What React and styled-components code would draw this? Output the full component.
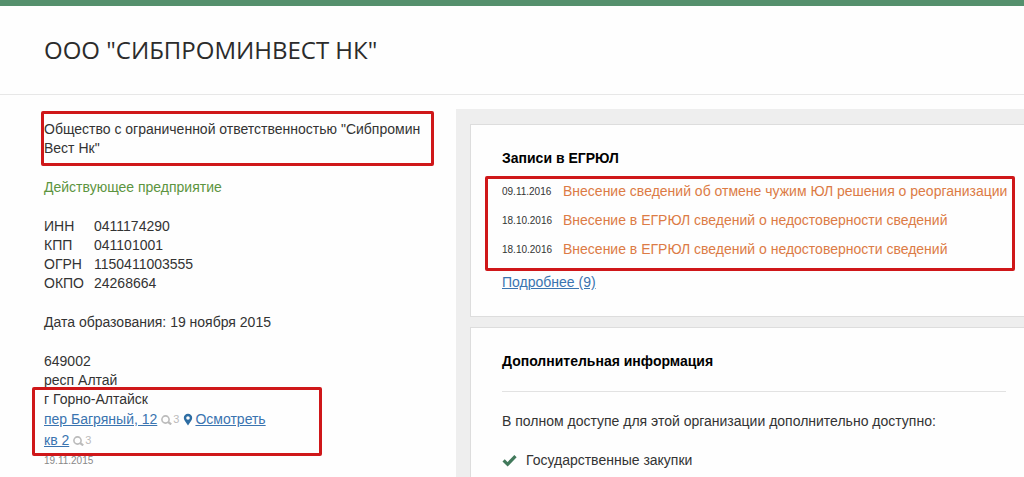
import React from "react";
import styled, { createGlobalStyle } from "styled-components";

const requisites = [
  { name: "ИНН", value: "0411174290" },
  { name: "КПП", value: "041101001" },
  { name: "ОГРН", value: "1150411003555" },
  { name: "ОКПО", value: "24268664" },
];

const records = [
  { id: 1, date: "09.11.2016", text: "Внесение сведений об отмене чужим ЮЛ решения о реорганизации" },
  { id: 2, date: "18.10.2016", text: "Внесение в ЕГРЮЛ сведений о недостоверности сведений" },
  { id: 3, date: "18.10.2016", text: "Внесение в ЕГРЮЛ сведений о недостоверности сведений" },
];

function SearchCount({ count }) {
  return (
    <Count>
      <svg width="11" height="10" viewBox="0 0 11 10" fill="none" stroke="currentColor" aria-hidden="true">
        <circle cx="4.5" cy="4.5" r="3.6" strokeWidth="1.6" />
        <path d="M7 6.8l3.2 2.6" strokeWidth="2.2" />
      </svg>
      {count}
    </Count>
  );
}

function PinIcon() {
  return (
    <svg width="10" height="13" viewBox="0 0 10 13" aria-hidden="true">
      <path
        d="M5 .8a4.2 4.2 0 0 0-4.2 4.2c0 2.6 2.6 4.6 4.2 7.4c1.600-2.800 4.200-4.800 4.200-7.400A4.200 4.200 0 0 0 5 .8zM5 3.200a1.800 1.800 0 1 1 0 3.600a1.800 1.800 0 0 1 0-3.600z"
        fill="currentColor"
        fillRule="evenodd"
      />
    </svg>
  );
}

function CheckIcon() {
  return (
    <svg width="15" height="13" viewBox="0 0 15 13" fill="none" aria-hidden="true">
      <path d="M1.600 6.300l4 4L13.500 2.200" stroke="#41795b" strokeWidth="3.200" />
    </svg>
  );
}

function Company() {
  return (
    <Info>
      <Marked $inset="-9px 22px -8px -3px">
        Общество с ограниченной ответственностью "Сибпромин
        <br />
        Вест Нк"
      </Marked>
      <Status>Действующее предприятие</Status>
      <Requisites>
        <tbody>
          {requisites.map((item) => (
            <tr key={item.name}>
              <th scope="row">{item.name}</th>
              <td>{item.value}</td>
            </tr>
          ))}
        </tbody>
      </Requisites>
      <div>Дата образования: 19 ноября 2015</div>
      <div>
        <div>649002</div>
        <div>респ Алтай</div>
        <Marked $inset="-3px 134px -5px -12px">
          <div>г Горно-Алтайск</div>
          <AddressLine>
            <Link href="#street">пер Багряный, 12</Link>
            <SearchCount count={3} />
            <Place>
              <PinIcon />
              <Link href="#map">Осмотреть</Link>
            </Place>
          </AddressLine>
          <AddressLine>
            <Link href="#flat">кв 2</Link>
            <SearchCount count={3} />
          </AddressLine>
        </Marked>
        <Updated>19.11.2015</Updated>
      </div>
    </Info>
  );
}

function App() {
  return (
    <Page>
      <GlobalStyle />
      <Header>
        <Title>ООО "СИБПРОМИНВЕСТ НК"</Title>
      </Header>
      <Content>
        <Company />
        <Panel>
          <Card>
            <CardTitle>Записи в ЕГРЮЛ</CardTitle>
            <Marked $inset="-1px 9px 2px -17px">
              <Records>
                {records.map((record) => (
                  <Record key={record.id}>
                    <RecordDate>{record.date}</RecordDate>
                    <RecordLink href="#record">{record.text}</RecordLink>
                  </Record>
                ))}
              </Records>
            </Marked>
            <Link href="#more">Подробнее (9)</Link>
          </Card>
          <Card $grow>
            <CardTitle $ruled>Дополнительная информация</CardTitle>
            <Text>В полном доступе для этой организации дополнительно доступно:</Text>
            <Feature>
              <CheckIcon />
              Государственные закупки
            </Feature>
          </Card>
        </Panel>
      </Content>
    </Page>
  );
}

const GlobalStyle = createGlobalStyle`
  * {
    box-sizing: border-box;
  }

  body {
    margin: 0;
    background-color: #fefefe;
    color: #333333;
    font-family: "Liberation Sans", Arial, sans-serif;
    font-size: 14px;
    line-height: 19px;
  }
`;

const Page = styled.div`
  display: flex;
  flex-direction: column;
  min-height: 100vh;
  border-top: 6px solid #55906d;
`;

const Header = styled.header`
  padding: 28px 44px;
  border-bottom: 1px solid #e7e7e7;
`;

const Title = styled.h1`
  margin: 0;
  color: #2b2b2b;
  font-family: "Open Sans", "Noto Sans", sans-serif;
  font-size: 24px;
  font-weight: 400;
  line-height: 32px;
`;

const Content = styled.main`
  flex: 1;
  display: grid;
  grid-template-columns: 456px minmax(0, 1fr);
`;

const Info = styled.section`
  display: flex;
  flex-direction: column;
  gap: 20px;
  padding: 25px 0 0 44px;
`;

/* red frame drawn over the important part */
const Marked = styled.div`
  position: relative;

  &::after {
    content: "";
    position: absolute;
    inset: ${(props) => props.$inset};
    border: 3px solid #cf1719;
    border-radius: 2px;
    pointer-events: none;
  }
`;

const Status = styled.div`
  color: #5c9440;
`;

const Requisites = styled.table`
  align-self: flex-start;
  border-collapse: collapse;

  th,
  td {
    padding: 0;
    font-weight: 400;
    text-align: left;
  }

  th {
    width: 50px;
  }
`;

const Link = styled.a`
  color: #3a74b0;
  text-decoration: underline;
`;

const AddressLine = styled.div`
  display: flex;
  align-items: center;
  gap: 4px;
  line-height: 21px;
`;

const Count = styled.span`
  display: flex;
  align-items: center;
  gap: 1px;
  color: #bbbbbb;
  font-size: 11px;
`;

const Place = styled.span`
  display: flex;
  align-items: center;
  gap: 2px;
  color: #2d6da3;
`;

const Updated = styled.div`
  color: #888888;
  font-size: 10px;
`;

const Panel = styled.section`
  display: flex;
  flex-direction: column;
  gap: 10px;
  margin-top: 14px;
  padding: 15px 0 0 14px;
  background-color: #eeeeee;
`;

const Card = styled.section`
  flex: ${(props) => (props.$grow ? 1 : "none")};
  padding: 23px 0 24px 31px;
  border: 1px solid #dddddd;
  border-right: 0;
  background-color: #fefefe;
`;

const CardTitle = styled.h2`
  margin: 0 18px 9px 0;
  padding-bottom: ${(props) => (props.$ruled ? "20px" : 0)};
  border-bottom: ${(props) => (props.$ruled ? "1px solid #e2e2e2" : 0)};
  color: #000000;
  font-size: 14px;
  font-weight: 700;
  line-height: 20px;
`;

const Records = styled.ul`
  margin: 0;
  padding: 0 0 9px;
  list-style: none;
`;

const Record = styled.li`
  display: flex;
  align-items: center;
  gap: 10px;
  line-height: 29px;
`;

const RecordDate = styled.time`
  flex: none;
  width: 51px;
  font-size: 10px;
`;

const RecordLink = styled.a`
  color: #dc7b45;
  text-decoration: none;
  white-space: nowrap;
`;

const Text = styled.p`
  margin: 20px 0;
`;

const Feature = styled.div`
  display: flex;
  align-items: center;
  gap: 9px;
`;

export default App;
